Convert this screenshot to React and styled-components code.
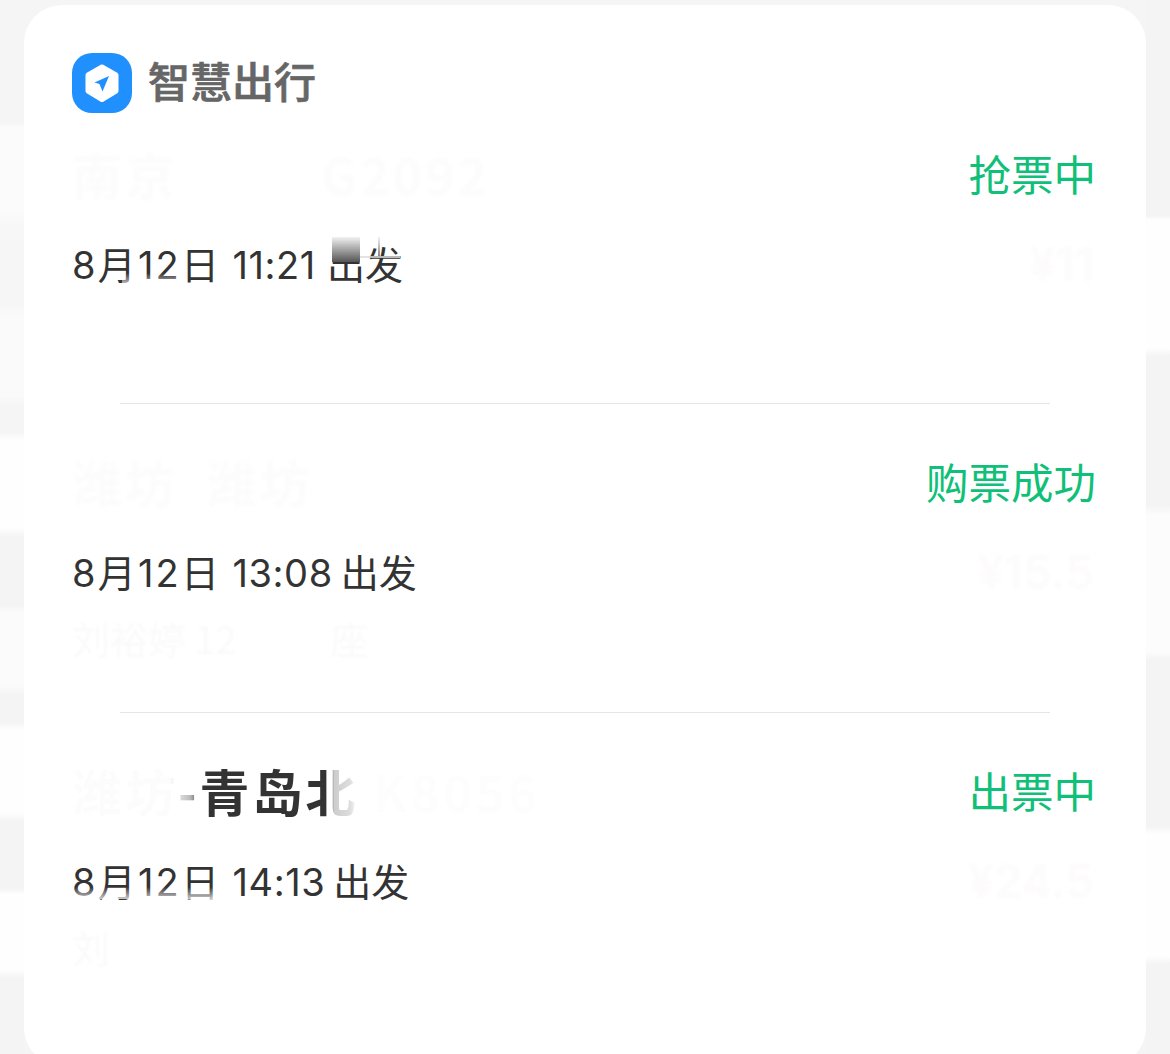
import React from "react";
import styled, { createGlobalStyle } from "styled-components";

const Global = createGlobalStyle`
  html, body { margin: 0; padding: 0; background: #f5f5f5; }
  body { font-family: "Inter", "Noto Sans CJK SC", sans-serif; }
`;

const Page = styled.div`
  width: 1170px;
  height: 1054px;
  overflow: hidden;
  padding: 5px 24px 0;
  box-sizing: border-box;
  background:
    linear-gradient(180deg,
      #f5f5f5 0 122px, #fbfbfb 128px 210px, #f8f8f8 222px, #f6f6f6 250px 305px, #fafafa 315px 395px,
      #f5f5f5 405px 432px, #fefefe 440px 527px, #f4f4f4 537px 605px, #fbfbfb 612px 686px, #f4f4f4 695px 722px,
      #fefefe 730px 812px, #f4f4f4 822px 888px, #fefefe 895px 970px, #f4f4f4 978px 100%)
      left top / 24px 100% no-repeat,
    linear-gradient(180deg,
      #f4f4f4 0 216px, #fefefe 220px 348px, #f4f4f4 356px 505px, #fcfcfc 515px 652px, #f4f4f4 660px 826px,
      #fefefe 834px 956px, #f4f4f4 964px 100%)
      right top / 24px 100% no-repeat,
    #f5f5f5;
`;

const Card = styled.main`
  height: 1061px;
  background: #fff;
  border-radius: 38px;
  padding: 48px 48px 0;
  box-sizing: border-box;
`;

const Header = styled.header`
  display: flex;
  align-items: center;
  gap: 16px;
  height: 60px;
`;

const AppName = styled.h1`
  margin: 0;
  padding-bottom: 6px;
  font-family: "Noto Sans CJK SC", sans-serif;
  font-size: 42px;
  font-weight: 500;
  -webkit-text-stroke: 0.7px #666;
  line-height: 60px;
  color: #666;
`;

const Trip = styled.section`
  position: relative;
  padding-top: ${(p) => p.$top}px;
  padding-bottom: ${(p) => p.$bottom}px;
`;

const Line = styled.div`
  display: flex;
  justify-content: space-between;
  align-items: center;
  height: 54px;
  margin-top: ${(p) => p.$gap || 0}px;
`;

const Route = styled.div`
  font-family: "Noto Sans CJK SC", sans-serif;
  font-size: 50px;
  letter-spacing: 3px;
  line-height: 54px;
  font-weight: 700;
  white-space: pre;
  padding-bottom: 4px;
  color: #fcfcfc;
  filter: blur(1.4px);
`;

const RevealedRoute = styled(Route)`
  filter: none;
  color: transparent;
  background: linear-gradient(90deg,
    #fcfcfc 0 98px, #bbb 118px, #333 130px, #333 258px, #ccc 262px, #ddd 278px, #f7f7f7 284px, #fdfdfd 300px);
  -webkit-background-clip: text;
  background-clip: text;
`;

const Status = styled.div`
  font-family: "Noto Sans CJK SC", sans-serif;
  font-size: 42.5px;
  line-height: 54px;
  padding-bottom: 4px;
  color: #10bf78;
  margin-right: 2px;
`;

const DateText = styled.div`
  font-size: 38px;
  line-height: 54px;
  letter-spacing: 0.6px;
  color: #333;
  white-space: pre;
  font-family: "Inter", "Noto Sans CJK SC", sans-serif;
`;

const Day = styled.span`
  letter-spacing: 2.2px;
`;

const Depart = styled.span`
  margin-left: ${(p) => p.$gap}px;
  letter-spacing: 0;
  font-family: "Noto Sans CJK SC", sans-serif;
`;

const Price = styled.div`
  font-family: "Inter", sans-serif;
  font-size: 46px;
  font-weight: 600;
  line-height: 54px;
  color: #fdfbfb;
  filter: blur(1.4px);
  margin-right: 4px;
`;

const Passenger = styled.div`
  font-family: "Noto Sans CJK SC", sans-serif;
  font-size: 38px;
  line-height: 54px;
  padding-bottom: 4px;
  color: #fafafa;
  filter: blur(0.8px);
  white-space: pre;
`;

const Divider = styled.hr`
  margin: 0 48px;
  border: 0;
  height: 1px;
  background: #e6e6e6;
`;

const Smudge = styled.div`
  position: absolute;
  left: ${(p) => p.$x}px;
  top: ${(p) => p.$y}px;
  width: ${(p) => p.$w}px;
  height: ${(p) => p.$h}px;
  background: ${(p) => p.$bg};
`;

const Logo = () => (
  <svg width="60" height="60" viewBox="0 0 60 60" aria-hidden="true">
    <rect width="60" height="60" rx="20" fill="#2090ff" />
    <path
      d="M30 14L44 22V38L30 46.5L16 38V22Z"
      fill="#fff"
      stroke="#fff"
      strokeWidth="5"
      strokeLinejoin="round"
    />
    <path d="M37 23L22.5 29.5L27.5 31L30.5 38.5Z" fill="#2090ff" />
  </svg>
);

const fadeDown = "linear-gradient(180deg, rgba(255,255,255,0), rgba(255,255,255,0.75))";

export default function App() {
  return (
    <Page>
      <Global />
      <Card>
        <Header>
          <Logo />
          <AppName>智慧出行</AppName>
        </Header>

        <Trip $top={35} $bottom={44}>
          <Line>
            <Route>{"南京          G2092"}</Route>
            <Status>抢票中</Status>
          </Line>
          <Line $gap={35}>
            <DateText>
              <Day>8月12日</Day> 11:21<Depart $gap={11}>出发</Depart>
            </DateText>
            <Price>¥11</Price>
          </Line>
          <Line $gap={14}>
            <Passenger> </Passenger>
          </Line>
          <Smudge $x={50} $y={160} $w={60} $h={12} $bg={fadeDown} />
          <Smudge $x={260} $y={124} $w={28} $h={25} $bg="linear-gradient(180deg, #f2f2f2, #555)" />
          <Smudge $x={306} $y={124} $w={2} $h={19} $bg="linear-gradient(180deg, #f2f2f2, #888)" />
          <Smudge $x={288} $y={143} $w={40} $h={2} $bg="rgba(220,220,220,0.8)" />
        </Trip>
        <Divider />

        <Trip $top={52} $bottom={45}>
          <Line>
            <Route>{"潍坊  潍坊"}</Route>
            <Status>购票成功</Status>
          </Line>
          <Line $gap={35}>
            <DateText>
              <Day>8月12日</Day> 13:08<Depart $gap={8}>出发</Depart>
            </DateText>
            <Price>¥15.5</Price>
          </Line>
          <Line $gap={14}>
            <Passenger>{"刘裕婷 12           座"}</Passenger>
          </Line>
        </Trip>
        <Divider />

        <Trip $top={52} $bottom={45}>
          <Line>
            <RevealedRoute>{"潍坊-青岛北 K8056"}</RevealedRoute>
            <Status>出票中</Status>
          </Line>
          <Line $gap={35}>
            <DateText>
              <Day>8月12日</Day> 14:13<Depart $gap={8}>出发</Depart>
            </DateText>
            <Price>¥24.5</Price>
          </Line>
          <Line $gap={14}>
            <Passenger>{"刘"}</Passenger>
          </Line>
          <Smudge $x={0} $y={174} $w={145} $h={12} $bg={fadeDown} />
        </Trip>
      </Card>
    </Page>
  );
}
